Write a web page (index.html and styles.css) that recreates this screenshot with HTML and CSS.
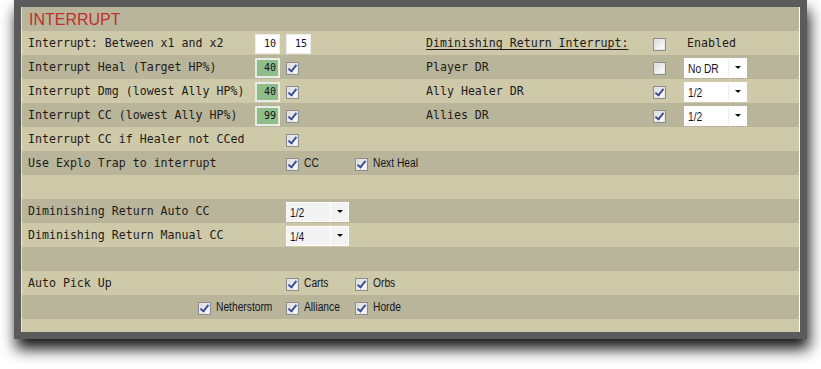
FILE: index.html
```html
<!DOCTYPE html>
<html>
<head>
<meta charset="utf-8">
<link rel="stylesheet" href="styles.css">
</head>
<body>
<div class="frame">
  <div class="panel">
    <div class="hdr">INTERRUPT</div>

    <div class="row light">
      <span class="lbl c-l">Interrupt: Between x1 and x2</span>
      <span class="num c-a">10</span>
      <span class="num c-b">15</span>
      <span class="lbl c-rl u">Diminishing Return Interrupt:</span>
      <span class="cb c-rc"></span>
      <span class="lbl c-rs en">Enabled</span>
    </div>

    <div class="row dark">
      <span class="lbl c-l">Interrupt Heal (Target HP%)</span>
      <span class="num green c-a">40</span>
      <span class="cb on c-b"></span>
      <span class="lbl c-rl">Player DR</span>
      <span class="cb c-rc"></span>
      <span class="sel white c-rs"><span class="sv"><span class="nt">No DR</span></span><span class="arr"></span></span>
    </div>

    <div class="row light">
      <span class="lbl c-l">Interrupt Dmg (lowest Ally HP%)</span>
      <span class="num green c-a">40</span>
      <span class="cb on c-b"></span>
      <span class="lbl c-rl">Ally Healer DR</span>
      <span class="cb on c-rc"></span>
      <span class="sel white c-rs"><span class="sv"><span class="nt">1/2</span></span><span class="arr"></span></span>
    </div>

    <div class="row dark">
      <span class="lbl c-l">Interrupt CC (lowest Ally HP%)</span>
      <span class="num green c-a">99</span>
      <span class="cb on c-b"></span>
      <span class="lbl c-rl">Allies DR</span>
      <span class="cb on c-rc"></span>
      <span class="sel white c-rs"><span class="sv"><span class="nt">1/2</span></span><span class="arr"></span></span>
    </div>

    <div class="row light">
      <span class="lbl c-l">Interrupt CC if Healer not CCed</span>
      <span class="cb on c-b"></span>
    </div>

    <div class="row dark">
      <span class="lbl c-l">Use Explo Trap to interrupt</span>
      <span class="chk c-b"><span class="cb on"></span><span class="ct nt">CC</span></span>
      <span class="chk c-c"><span class="cb on"></span><span class="ct nt">Next Heal</span></span>
    </div>

    <div class="row light"></div>

    <div class="row dark">
      <span class="lbl c-l">Diminishing Return Auto CC</span>
      <span class="sel c-b"><span class="sv"><span class="nt">1/2</span></span><span class="arr"></span></span>
    </div>

    <div class="row light">
      <span class="lbl c-l">Diminishing Return Manual CC</span>
      <span class="sel c-b"><span class="sv"><span class="nt">1/4</span></span><span class="arr"></span></span>
    </div>

    <div class="row dark"></div>

    <div class="row light">
      <span class="lbl c-l">Auto Pick Up</span>
      <span class="chk c-b"><span class="cb on"></span><span class="ct nt">Carts</span></span>
      <span class="chk c-c"><span class="cb on"></span><span class="ct nt">Orbs</span></span>
    </div>

    <div class="row dark">
      <span class="chk c-l nether"><span class="cb on"></span><span class="ct nt">Netherstorm</span></span>
      <span class="chk c-b"><span class="cb on"></span><span class="ct nt">Alliance</span></span>
      <span class="chk c-c"><span class="cb on"></span><span class="ct nt">Horde</span></span>
    </div>

    <div class="row light tail"></div>
  </div>
</div>
</body>
</html>
```

FILE: styles.css
```css
html, body {
  margin: 0;
  padding: 0;
  background: #ffffff;
}

body {
  width: 821px;
  height: 369px;
  overflow: hidden;
}

.frame {
  margin-left: 14px;
  width: 779px;
  height: 325px;
  border-style: solid;
  border-color: #5b5b5b;
  border-width: 7px;
  box-shadow: 2px 10px 14px 0 rgba(0, 0, 0, 0.92);
}

.panel {
  width: 778px;
  height: 325px;
  border-right: 1px solid #ffffff;
  background: #cdc9a9;
  display: flex;
  flex-direction: column;
  overflow: hidden;
  position: relative;
}

.panel::before {
  content: "";
  position: absolute;
  left: 0;
  top: 0;
  bottom: 0;
  width: 1px;
  background: rgba(255, 255, 255, 0.55);
}

.hdr {
  height: 24px;
  flex: none;
  background: #b8b59b;
  color: #c0302c;
  font-family: "Liberation Sans", Arial, sans-serif;
  font-size: 16px;
  line-height: 25px;
  padding-left: 8px;
}

.row {
  height: 24px;
  flex: none;
  display: grid;
  grid-template-columns: 7px 227px 31px 69px 71px 227px 31px 1fr;
  grid-template-rows: 24px;
  align-items: center;
}

.row.light { background: #cdc9a9; }
.row.dark { background: #b8b59b; }
.row.tail { height: 13px; }

.c-l  { grid-column: 2; }
.c-a  { grid-column: 3; }
.c-b  { grid-column: 4; }
.c-c  { grid-column: 5; }
.c-rl { grid-column: 6; }
.c-rc { grid-column: 7; }
.c-rs { grid-column: 8; }

.lbl {
  font-family: "DejaVu Sans Mono", "Liberation Mono", monospace;
  font-size: 11.6px;
  color: #231a1a;
  white-space: nowrap;
  line-height: 24px;
}

.u { text-decoration: underline; text-underline-offset: 2px; }
.en { margin-left: 3px; }

.num {
  box-sizing: border-box;
  width: 25px;
  height: 20px;
  margin-top: 1px;
  background: #ffffff;
  border: 1px solid #ececec;
  font-family: "DejaVu Sans Mono", "Liberation Mono", monospace;
  font-size: 10px;
  color: #101020;
  text-align: right;
  padding-right: 3px;
  line-height: 18px;
}

.num.green {
  background: #8fbd88;
  border: 2px solid #e9ece6;
  line-height: 16px;
  padding-right: 2px;
}

.cb {
  box-sizing: border-box;
  flex: none;
  width: 13px;
  height: 13px;
  margin-top: 2px;
  border: 1px solid #8c8d8f;
  background: linear-gradient(135deg, #d6d6d6 0%, #f1f1f1 60%, #ffffff 100%);
  box-shadow: inset 0 0 0 1px #e6e6e6;
  display: inline-block;
  position: relative;
}

.cb.on::after {
  content: "";
  position: absolute;
  left: 3px;
  top: 0px;
  width: 3px;
  height: 7px;
  border-right: 2px solid #3e4f98;
  border-bottom: 2px solid #3e4f98;
  transform: rotate(38deg);
  transform-origin: center;
}

.chk {
  display: flex;
  align-items: center;
  white-space: nowrap;
}

.chk .cb { margin-top: 2px; }

.nt {
  display: inline-block;
  font-family: "Liberation Sans", Arial, sans-serif;
  font-size: 12.5px;
  color: #15151f;
  transform: scaleX(0.82);
  transform-origin: left center;
  white-space: nowrap;
}

.ct {
  margin-left: 5px;
  line-height: 24px;
}

.nether {
  margin-left: 170px;
}

.sel {
  box-sizing: border-box;
  width: 63px;
  height: 20px;
  margin-top: 1px;
  background: #f3f3f3;
  border: 1px solid #ffffff;
  display: flex;
}

.sel.white { background: #ffffff; }

.sv {
  width: 44px;
  flex: none;
  border-right: 1px solid #ffffff;
  line-height: 18px;
  padding-left: 3px;
  box-sizing: border-box;
  overflow: hidden;
}

.sel.white .sv { border-right-color: #ececec; }

.arr {
  flex: 1;
  display: flex;
  align-items: center;
  justify-content: center;
}

.arr::after {
  content: "";
  width: 0;
  height: 0;
  border-left: 3px solid transparent;
  border-right: 3px solid transparent;
  border-top: 3px solid #111111;
}
```
